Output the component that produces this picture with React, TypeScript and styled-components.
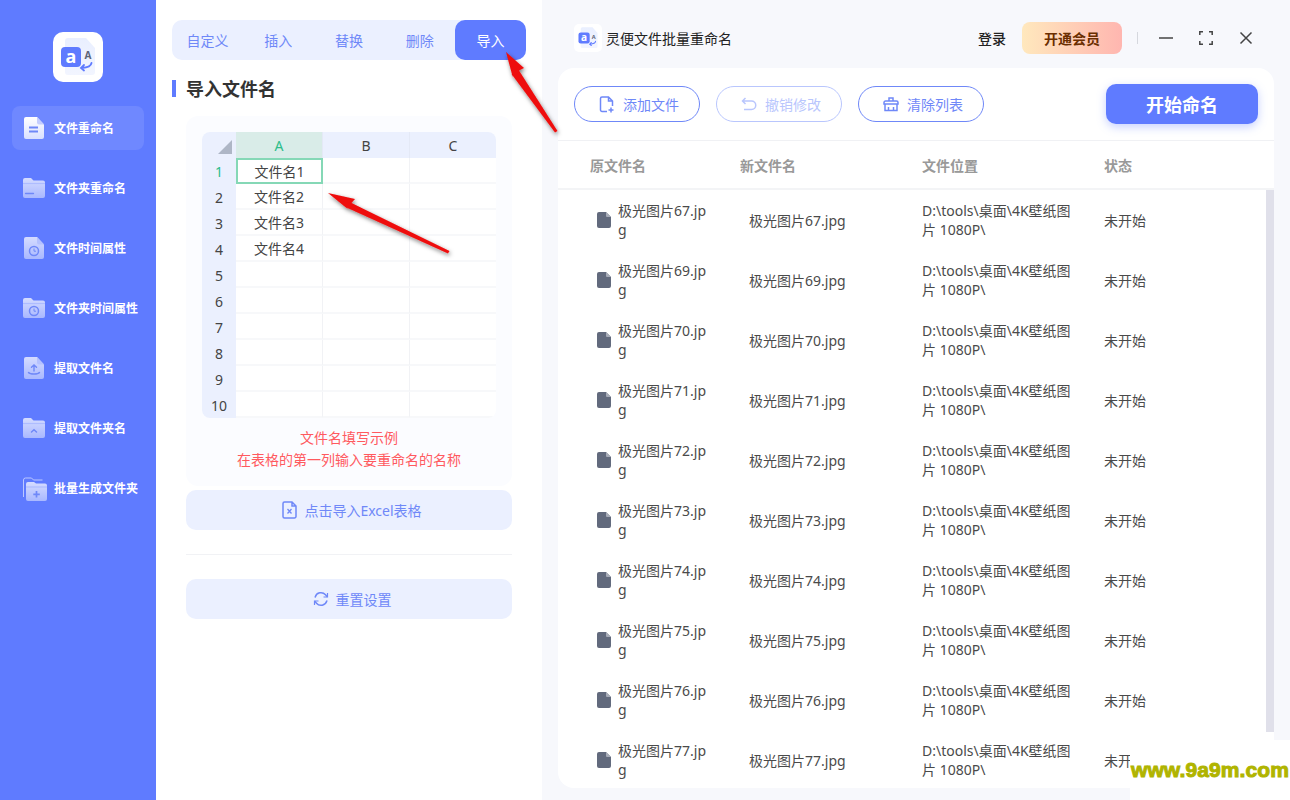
import { Fragment } from "react";
import styled, { createGlobalStyle } from "styled-components";

const FONT = `"Noto Sans", "Noto Sans CJK SC", sans-serif`;

const GlobalStyle = createGlobalStyle`
    html, body {
        margin: 0;
        padding: 0;
        background: #ffffff;
    }
    * {
        box-sizing: border-box;
    }
    body {
        font-family: ${FONT};
    }
`;

const Page = styled.div`
    position: relative;
    display: flex;
    width: 1290px;
    height: 800px;
    overflow: hidden;
`;

/* sidebar */
const Sidebar = styled.aside`
    width: 156px;
    flex-shrink: 0;
    background: #5f7bff;
    padding: 32px 12px 0;
    display: flex;
    flex-direction: column;
`;

const LogoBox = styled.div`
    width: 50px;
    height: 50px;
    margin: 0 auto 24px;
    background: #ffffff;
    border-radius: 10px;
    display: flex;
`;

const NavList = styled.nav`
    display: flex;
    flex-direction: column;
    gap: 16px;
`;

const NavItem = styled.div<{ $active?: boolean }>`
    height: 44px;
    border-radius: 8px;
    display: flex;
    align-items: center;
    gap: 9px;
    padding-left: 11px;
    font-size: 12px;
    font-weight: 700;
    color: #ffffff;
    background: ${(p) => (p.$active ? "#6f88ff" : "transparent")};

    svg {
        overflow: visible;
    }
`;

/* settings panel */
const Panel = styled.section`
    width: 386px;
    flex-shrink: 0;
    background: #ffffff;
    padding: 20px 16px 0;
    display: flex;
    flex-direction: column;
`;

const Tabs = styled.div`
    display: grid;
    grid-template-columns: repeat(5, 1fr);
    height: 40px;
    background: #ebf0ff;
    border-radius: 10px;
`;

const Tab = styled.div<{ $active?: boolean }>`
    display: flex;
    align-items: center;
    justify-content: center;
    font-size: 14px;
    border-radius: 10px;
    color: ${(p) => (p.$active ? "#ffffff" : "#6f88f8")};
    background: ${(p) => (p.$active ? "#5f7bff" : "transparent")};
`;

const SectionTitle = styled.h2`
    margin: 20px 0 19px;
    height: 17px;
    border-left: 4px solid #5f7bff;
    padding: 0 0 2px 10px;
    display: flex;
    align-items: center;
    font-size: 18px;
    font-weight: 700;
    color: #333333;
`;

const PanelBody = styled.div`
    margin-left: 14px;
    width: 326px;
    display: flex;
    flex-direction: column;
`;

const SampleCard = styled.div`
    height: 370px;
    background: #fbfcff;
    border-radius: 12px;
    padding: 16px 16px 0;
`;

const Sheet = styled.div`
    display: grid;
    grid-template-columns: 34px 87px 87px 86px;
    grid-auto-rows: 26px;
    background: #ffffff;
    border-radius: 8px;
    overflow: hidden;
`;

const Corner = styled.div`
    background: #ebf0fe;
    display: flex;
    align-items: flex-end;
    justify-content: flex-end;
    padding: 0 4px 4px 0;

    &::after {
        content: "";
        width: 14px;
        height: 14px;
        background: #aeb6c6;
        clip-path: polygon(100% 0, 100% 100%, 0 100%);
    }
`;

const ColHead = styled.div<{ $active?: boolean }>`
    display: flex;
    align-items: center;
    justify-content: center;
    font-size: 14px;
    border-right: 1px solid #e4e9f6;
    color: ${(p) => (p.$active ? "#2dbd8a" : "#444444")};
    background: ${(p) => (p.$active ? "#d9ece8" : "#ebf0fe")};

    &:nth-child(4n) {
        border-right: none;
    }
`;

const RowHead = styled.div<{ $active?: boolean }>`
    display: flex;
    align-items: center;
    justify-content: center;
    font-size: 14px;
    color: ${(p) => (p.$active ? "#2dbd8a" : "#444444")};
    background: #ebf0fe;
`;

const Cell = styled.div<{ $selected?: boolean }>`
    display: flex;
    align-items: center;
    justify-content: center;
    font-size: 14px;
    color: #444444;
    border-right: 1px solid #f1f2f5;
    border-bottom: 2px solid #f7f8fa;
    ${(p) => p.$selected && "border: 2px solid #85d8b6;"}

    &:nth-child(4n) {
        border-right: none;
    }
`;

const Caption = styled.p`
    margin: 9px 0 0;
    text-align: center;
    font-size: 14px;
    line-height: 22px;
    color: #ff5a5f;
`;

const SoftButton = styled.div`
    height: 40px;
    background: #ebf0ff;
    border-radius: 10px;
    display: flex;
    align-items: center;
    justify-content: center;
    gap: 7px;
    padding-left: 6px;
    font-size: 14px;
    color: #6f88f8;
`;

const ImportButton = styled(SoftButton)`
    margin-top: 4px;
`;

const Divider = styled.div`
    height: 1px;
    margin: 24px 0;
    background: #f1f2f5;
`;

/* right side */
const Main = styled.main`
    flex: 1;
    background: #f7f8fc;
    padding: 0 16px 12px;
    display: flex;
    flex-direction: column;
`;

const TitleBar = styled.header`
    height: 68px;
    display: flex;
    align-items: center;
    padding: 8px 0 0 16px;
`;

const SmallLogo = styled.div`
    width: 28px;
    height: 28px;
    background: #ffffff;
    border-radius: 5px;
    display: flex;
    margin-right: 4px;
`;

const AppName = styled.div`
    font-size: 14px;
    color: #222222;
`;

const TitleActions = styled.div`
    margin-left: auto;
    display: flex;
    align-items: center;
`;

const Login = styled.div`
    font-size: 14px;
    font-weight: 500;
    color: #222222;
    margin-right: 16px;
`;

const VipButton = styled.div`
    width: 100px;
    height: 32px;
    border-radius: 8px;
    display: flex;
    align-items: center;
    justify-content: center;
    font-size: 14px;
    font-weight: 700;
    color: #6b2e00;
    background: linear-gradient(90deg, #ffe8bd, #ffb6b0);
`;

const BarSeparator = styled.div`
    width: 1px;
    height: 12px;
    margin: 0 21px 0 15px;
    background: #d6d8de;
`;

const WindowButtons = styled.div`
    display: flex;
    gap: 26px;
    margin-right: 21px;
    color: #444444;
`;

const Card = styled.div`
    flex: 1;
    min-height: 0;
    background: #ffffff;
    border-radius: 16px;
    display: flex;
    flex-direction: column;
    overflow: hidden;
`;

const Toolbar = styled.div`
    height: 73px;
    flex-shrink: 0;
    display: flex;
    align-items: center;
    gap: 16px;
    padding: 0 16px;
    border-bottom: 1px solid #f0f1f4;
`;

const OutlineButton = styled.div<{ $disabled?: boolean }>`
    width: 126px;
    height: 36px;
    border-radius: 18px;
    border: 1px solid ${(p) => (p.$disabled ? "#b9c6fd" : "#6f88f8")};
    color: ${(p) => (p.$disabled ? "#b9c6fd" : "#6f88f8")};
    display: flex;
    align-items: center;
    justify-content: center;
    gap: 8px;
    padding-left: 4px;
    font-size: 14px;
`;

const StartButton = styled.div`
    margin-left: auto;
    width: 152px;
    height: 40px;
    border-radius: 10px;
    background: #5f7bff;
    color: #ffffff;
    font-size: 18px;
    font-weight: 700;
    display: flex;
    align-items: center;
    justify-content: center;
    box-shadow: 0 3px 10px rgba(95, 123, 255, 0.35);
`;

const ListHead = styled.div`
    height: 49px;
    flex-shrink: 0;
    display: grid;
    grid-template-columns: 150px 182px 182px 1fr;
    align-items: center;
    padding-left: 32px;
    font-size: 14px;
    font-weight: 700;
    color: #999999;
    border-bottom: 2px solid #f3f4f6;
`;

const ListArea = styled.div`
    flex: 1;
    min-height: 0;
    display: flex;
    overflow: hidden;
`;

const Rows = styled.div`
    flex: 1;
    min-width: 0;
`;

const Row = styled.div`
    height: 60px;
    display: grid;
    grid-template-columns: 152px 173px 182px 1fr;
    align-items: center;
    padding-left: 39px;
    font-size: 14px;
    line-height: 19px;
    color: #4a4a4a;
`;

const NameCell = styled.div`
    display: flex;
    align-items: center;
    gap: 7px;
`;

const BrokenText = styled.div<{ $width: number }>`
    width: ${(p) => p.$width}px;
    word-break: break-all;
`;

const ScrollTrack = styled.div`
    width: 8px;
    flex-shrink: 0;
`;

const ScrollThumb = styled.div`
    height: 542px;
    background: #e0e0ea;
`;

/* things lying over the page */
const ArrowLayer = styled.svg`
    position: absolute;
    left: 0;
    top: 0;
    pointer-events: none;
`;

const Watermark = styled.div`
    position: absolute;
    right: 0;
    bottom: 0;
    width: 160px;
    height: 60px;
    background: #ffffff;
    display: flex;
    align-items: center;
    justify-content: center;
    font-family: "Liberation Sans", sans-serif;
    font-size: 21px;
    font-weight: 700;
    letter-spacing: 0.1px;
    color: #b0b400;
    -webkit-text-stroke: 1px #b0b400;
`;

const AppLogo = ({ id }: { id: string }) => (
    <svg width="100%" height="100%" viewBox="0 0 50 50">
        <defs>
            <linearGradient id={id} x1="0" y1="0" x2="0" y2="1">
                <stop offset="0" stopColor="#e9efff" />
                <stop offset="1" stopColor="#f2f5ff" />
            </linearGradient>
        </defs>
        <path d="M12 9a3 3 0 0 1 3-3h18l9 10v24a3 3 0 0 1-3 3H15a3 3 0 0 1-3-3z" fill={`url(#${id})`} />
        <rect x="8" y="15" width="20" height="20" rx="4" fill="#5f7bff" />
        <text x="18" y="31" textAnchor="middle" fontSize="18" fontWeight="700" fill="#ffffff" fontFamily="Noto Sans">
            a
        </text>
        <text x="35" y="27" textAnchor="middle" fontSize="10" fontWeight="700" fill="#5d6478" fontFamily="Noto Sans">
            A
        </text>
        <path
            d="M38.500 31c-.5 3-3 4.500-9.500 5M31 33l-3 3 3 2.500"
            fill="none"
            stroke="#5f7bff"
            strokeWidth="1.800"
            strokeLinecap="round"
        />
    </svg>
);

const IconGradient = ({ id, bright }: { id: string; bright?: boolean }) => (
    <defs>
        <linearGradient id={id} x1="0" y1="0" x2="0" y2="1">
            <stop offset="0" stopColor={bright ? "#ffffff" : "#d5dcff"} />
            <stop offset="1" stopColor={bright ? "#d9e0ff" : "#a9b8ff"} />
        </linearGradient>
    </defs>
);

const DOC = "M1 2a2 2 0 0 1 2-2h11l7 7.500V20a2 2 0 0 1-2 2H3a2 2 0 0 1-2-2z";
const FOLDER = "M0 3a2 2 0 0 1 2-2h6l2.500 2.500H20a2 2 0 0 1 2 2V19a2 2 0 0 1-2 2H2a2 2 0 0 1-2-2z";
const FRONT_FOLDER = "M3 7a2 2 0 0 1 2-2h6l2 1.500h9a2 2 0 0 1 2 2V22a2 2 0 0 1-2 2H5a2 2 0 0 1-2-2z";

const NavIcon = ({ kind, id }: { kind: number; id: string }) => {
    const ink = "#6f88f8";
    const isDoc = kind === 0 || kind === 2 || kind === 4;
    return (
        <svg width="22" height="22" viewBox="0 0 22 22" fill="none">
            <IconGradient id={id} bright={kind === 0} />
            {kind === 6 && <path d="M.5 20V3a2 2 0 0 1 2-2h6l2 2h9" stroke="#bcc8ff" strokeWidth="1" />}
            <path d={isDoc ? DOC : kind === 6 ? FRONT_FOLDER : FOLDER} fill={`url(#${id})`} />
            {isDoc && <path d="M14 0l7 7.500h-5a2 2 0 0 1-2-2z" fill={kind === 0 ? "#c3cdff" : "#b4c1ff"} />}
            {!isDoc && <path d={kind === 6 ? "M3 10h21" : "M0 6.500h22"} stroke="#aebcff" strokeWidth="1.200" />}
            {kind === 0 && <path d="M6 10.500h9M6 14.500h9" stroke={ink} strokeWidth="1.800" />}
            {kind === 1 && <path d="M2.500 16.500h8" stroke={ink} strokeWidth="1.300" strokeLinecap="round" />}
            {(kind === 2 || kind === 3) && (
                <g stroke={ink} strokeWidth="1.500">
                    <circle cx="11" cy="14" r="4.500" />
                    <path d="M11 11.500v2.700h2" strokeWidth="1" />
                </g>
            )}
            {kind === 4 && (
                <path
                    d="M11 14V8M8.500 10.300L11 8l2.500 2.300M5.500 15.500c1.500 2 9.500 2 11 0"
                    stroke={ink}
                    strokeWidth="1.400"
                    strokeLinecap="round"
                />
            )}
            {kind === 5 && <path d="M8.500 15l2.500-2.300 2.500 2.300" stroke={ink} strokeWidth="1.500" strokeLinecap="round" />}
            {kind === 6 && <path d="M13.500 14v6.500M10.300 17.300h6.500" stroke={ink} strokeWidth="1.700" />}
        </svg>
    );
};

const ExcelIcon = () => (
    <svg width="15" height="18" viewBox="0 0 15 18" fill="none" stroke="#6f88f8" strokeWidth="1.500">
        <path d="M2.500 1H10l4 4v10.500a1.500 1.500 0 0 1-1.500 1.500h-10A1.500 1.500 0 0 1 1 15.500v-13A1.500 1.500 0 0 1 2.500 1zM10 1v4h4" />
        <path d="M5.500 8l4 4.500M9.500 8l-4 4.500" strokeWidth="1.300" />
    </svg>
);

const ResetIcon = () => (
    <svg width="16" height="16" viewBox="0 0 16 16" fill="none" stroke="#6f88f8" strokeWidth="1.500">
        <path d="M2.200 6a6 6 0 0 1 10.300-2.200L14 5.500" strokeLinecap="round" />
        <path d="M13.800 10a6 6 0 0 1-10.300 2.200L2 10.500" strokeLinecap="round" />
        <path d="M14.500 2v4h-4M1.500 14v-4h4" strokeWidth="1.200" />
    </svg>
);

const AddFileIcon = () => (
    <svg width="16" height="17" viewBox="0 0 16 17" fill="none" stroke="#6f88f8" strokeWidth="1.500">
        <path d="M8 15.500H3A1.500 1.500 0 0 1 1.500 14V2.500A1.500 1.500 0 0 1 3 1h6.500l4 4v5M9.500 1v4h4" />
        <path d="M12 11.500v5M9.500 14h5" />
    </svg>
);

const UndoIcon = () => (
    <svg width="16" height="14" viewBox="0 0 16 14" fill="none" stroke="#b9c6fd" strokeWidth="1.500">
        <path d="M4.500 1L1.500 4l3 3M2 4h8.500a4 4 0 0 1 0 8.500H3" />
    </svg>
);

const BasketIcon = () => (
    <svg width="16" height="16" viewBox="0 0 16 16" fill="none" stroke="#6f88f8" strokeWidth="1.500">
        <path d="M6 5V2h4v3M1 8V6.500A1.500 1.500 0 0 1 2.500 5h11A1.500 1.500 0 0 1 15 6.500V8zM2 8v6.500h12V8M5.500 11v3.500M10.500 11v3.500" />
    </svg>
);

const FileIcon = () => (
    <svg width="14" height="16" viewBox="0 0 14 16">
        <path d="M2 0h7l5 5v9a2 2 0 0 1-2 2H2a2 2 0 0 1-2-2V2a2 2 0 0 1 2-2z" fill="#626a7d" />
        <path d="M9 0l5 5H10a1 1 0 0 1-1-1z" fill="#a7acb8" />
    </svg>
);

const navItems = ["文件重命名", "文件夹重命名", "文件时间属性", "文件夹时间属性", "提取文件名", "提取文件夹名", "批量生成文件夹"];
const tabs = ["自定义", "插入", "替换", "删除", "导入"];
const columns = ["A", "B", "C"];
const sheetRows = [1, 2, 3, 4, 5, 6, 7, 8, 9, 10];
const fileNumbers = [67, 69, 70, 71, 72, 73, 74, 75, 76, 77];

export default function App() {
    return (
        <Page>
            <GlobalStyle />
            <Sidebar>
                <LogoBox>
                    <AppLogo id="logo-large" />
                </LogoBox>
                <NavList>
                    {navItems.map((label, i) => (
                        <NavItem key={label} $active={i === 0}>
                            <NavIcon kind={i} id={`nav-${i}`} />
                            {label}
                        </NavItem>
                    ))}
                </NavList>
            </Sidebar>

            <Panel>
                <Tabs>
                    {tabs.map((tab) => (
                        <Tab key={tab} $active={tab === "导入"}>
                            {tab}
                        </Tab>
                    ))}
                </Tabs>
                <SectionTitle>导入文件名</SectionTitle>
                <PanelBody>
                    <SampleCard>
                        <Sheet>
                            <Corner />
                            {columns.map((col) => (
                                <ColHead key={col} $active={col === "A"}>
                                    {col}
                                </ColHead>
                            ))}
                            {sheetRows.map((row) => (
                                <Fragment key={row}>
                                    <RowHead $active={row === 1}>{row}</RowHead>
                                    <Cell $selected={row === 1}>{row <= 4 ? `文件名${row}` : ""}</Cell>
                                    <Cell />
                                    <Cell />
                                </Fragment>
                            ))}
                        </Sheet>
                        <Caption>
                            文件名填写示例
                            <br />
                            在表格的第一列输入要重命名的名称
                        </Caption>
                    </SampleCard>
                    <ImportButton>
                        <ExcelIcon />
                        点击导入Excel表格
                    </ImportButton>
                    <Divider />
                    <SoftButton>
                        <ResetIcon />
                        重置设置
                    </SoftButton>
                </PanelBody>
            </Panel>

            <Main>
                <TitleBar>
                    <SmallLogo>
                        <AppLogo id="logo-small" />
                    </SmallLogo>
                    <AppName>灵便文件批量重命名</AppName>
                    <TitleActions>
                        <Login>登录</Login>
                        <VipButton>开通会员</VipButton>
                        <BarSeparator />
                        <WindowButtons>
                            <svg width="14" height="14" viewBox="0 0 14 14" stroke="currentColor" strokeWidth="1.500">
                                <path d="M0 7h14" />
                            </svg>
                            <svg width="14" height="14" viewBox="0 0 14 14" fill="none" stroke="currentColor" strokeWidth="1.500">
                                <path d="M.8 4V.8H4M10 .8h3.200V4M13.200 10v3.200H10M4 13.200H.8V10" />
                            </svg>
                            <svg width="14" height="14" viewBox="0 0 14 14" stroke="currentColor" strokeWidth="1.500">
                                <path d="M1.500 1.500l11 11M12.500 1.500l-11 11" />
                            </svg>
                        </WindowButtons>
                    </TitleActions>
                </TitleBar>
                <Card>
                    <Toolbar>
                        <OutlineButton>
                            <AddFileIcon />
                            添加文件
                        </OutlineButton>
                        <OutlineButton $disabled>
                            <UndoIcon />
                            撤销修改
                        </OutlineButton>
                        <OutlineButton>
                            <BasketIcon />
                            清除列表
                        </OutlineButton>
                        <StartButton>开始命名</StartButton>
                    </Toolbar>
                    <ListHead>
                        <div>原文件名</div>
                        <div>新文件名</div>
                        <div>文件位置</div>
                        <div>状态</div>
                    </ListHead>
                    <ListArea>
                        <Rows>
                            {fileNumbers.map((n) => (
                                <Row key={n}>
                                    <NameCell>
                                        <FileIcon />
                                        <BrokenText $width={92}>{`极光图片${n}.jpg`}</BrokenText>
                                    </NameCell>
                                    <div>{`极光图片${n}.jpg`}</div>
                                    <BrokenText $width={156}>{"D:\\tools\\桌面\\4K壁纸图片 1080P\\"}</BrokenText>
                                    <div>未开始</div>
                                </Row>
                            ))}
                        </Rows>
                        <ScrollTrack>
                            <ScrollThumb />
                        </ScrollTrack>
                    </ListArea>
                </Card>
            </Main>

            <ArrowLayer width="1290" height="800" viewBox="0 0 1290 800">
                <defs>
                    <filter id="arrow-shadow" x="-30%" y="-30%" width="160%" height="160%">
                        <feDropShadow dx="1" dy="2" stdDeviation="2" floodColor="#000000" floodOpacity="0.5" />
                    </filter>
                </defs>
                <path d="M506 52L524 68L519 70.500L557.500 131L555 132.500L511.500 74L513 78z" fill="#ee0c0c" filter="url(#arrow-shadow)" />
                <path d="M328 193L355 199L351.500 203L449.500 251L448 253.500L346.500 207.500L349 210z" fill="#ee0c0c" filter="url(#arrow-shadow)" />
            </ArrowLayer>

            <Watermark>www.9a9m.com</Watermark>
        </Page>
    );
}
